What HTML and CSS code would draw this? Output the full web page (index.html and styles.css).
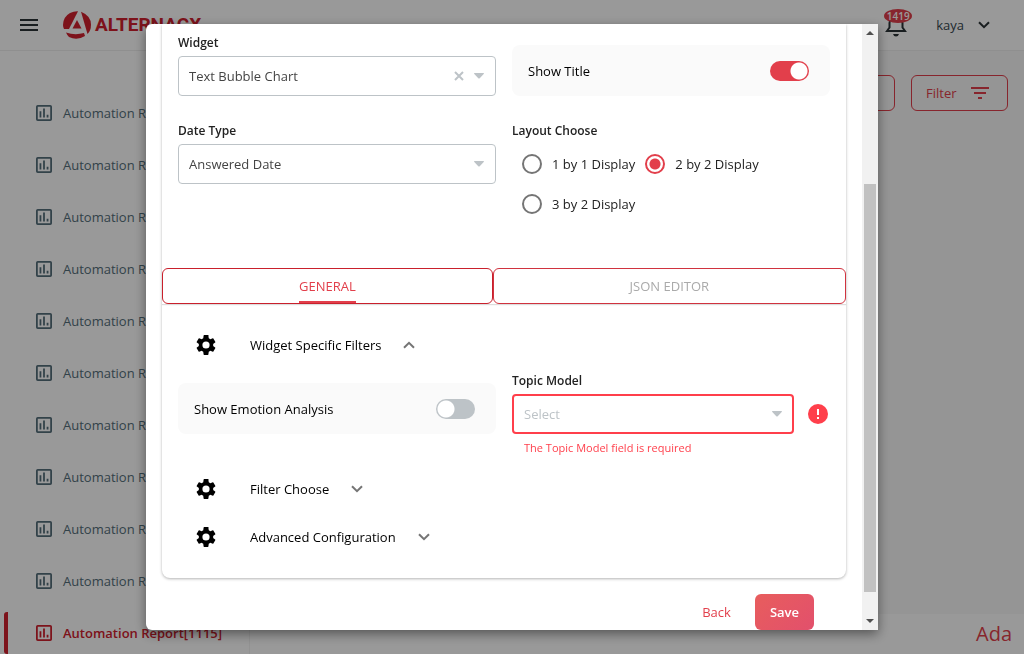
FILE: index.html
```html
<!DOCTYPE html>
<html lang="en">
<head>
<meta charset="utf-8">
<title>AlternaCX - Dashboard</title>
<link rel="stylesheet" href="styles.css">
</head>
<body>
<svg class="defs" aria-hidden="true">
  <symbol id="i-report" viewBox="3 3 18 18"><path fill-rule="evenodd" d="M19 3H5a2 2 0 0 0-2 2v14a2 2 0 0 0 2 2h14a2 2 0 0 0 2-2V5a2 2 0 0 0-2-2zm0 16H5V5h14zM7 10h2v7H7zm4-3h2v10h-2zm4 7h2v3h-2z"/></symbol>
  <symbol id="i-gear" viewBox="2 2 20 20"><path d="M19.14 12.94c.04-.3.06-.61.06-.94 0-.32-.02-.64-.07-.94l2.03-1.58a.49.49 0 0 0 .12-.61l-1.92-3.32a.49.49 0 0 0-.59-.22l-2.39.96a7 7 0 0 0-1.62-.94l-.36-2.54A.48.48 0 0 0 13.92 2h-3.84a.48.48 0 0 0-.47.41l-.36 2.940a7.400 7.400 0 0 0-1.62.94l-2.39-.96a.48.48 0 0 0-.59.22L2.74 8.87a.48.48 0 0 0 .12.61l2.03 1.58a6 6 0 0 0-.02 1.88l-2.03 1.58a.49.49 0 0 0-.12.61l1.92 3.32c.12.22.37.29.59.22l2.39-.96c.5.38 1.03.7 1.62.94l.36 2.940c.05.24.24.41.48.41h3.84c.24 0 .44-.17.47-.41l.36-2.940a7 7 0 0 0 1.62-.94l2.39.96c.22.08.47 0 .59-.22l1.92-3.32a.48.48 0 0 0-.12-.61zM12 15.600a3.600 3.600 0 1 1 0-7.200 3.600 3.600 0 0 1 0 7.200z"/></symbol>
  <symbol id="i-down" viewBox="0 0 12 8"><path d="M1 1.200l5 5 5-5" fill="none" stroke="currentColor" stroke-width="2"/></symbol>
  <symbol id="i-caret" viewBox="0 0 10 6"><path d="M.5 0h9q.8.3.2 1L5.700 5.200q-.7.600-1.400 0L.3 1Q-.3.3.5 0z"/></symbol>
</svg>

<header class="topbar">
  <button class="icon-btn" aria-label="Menu"><svg class="burger" viewBox="0 0 18 12"><path d="M0 0h18v2H0zm0 5h18v2H0zm0 5h18v2H0z"/></svg></button>
  <a class="brand" href="#">
    <svg class="brand-mark" viewBox="0 0 28 28">
      <path d="M15 .2Q11 0 7 2 0 6 0 14q0 2 1 4h5z"/>
      <path d="M18 .8q10 4 10 13 0 6-3.500 9.200z"/>
      <path d="M3 21.500q9 3 18 .5l1 3q-8 5-16 1-2-2-3-4.500z"/>
      <path d="M14 9l4.500 8.500h-9z"/>
    </svg>
    <span>ALTERNACX</span>
  </a>
  <div class="account">
    <button class="icon-btn bell" aria-label="Notifications">
      <svg viewBox="0 0 24 24"><path fill="none" stroke="currentColor" stroke-width="2" d="M3 18l2.500-3.500V10a6.500 6.500 0 0 1 13 0v4.500L21 18z"/><path d="M9 21h6q-.7 2.500-3 2.500T9 21z"/></svg>
      <span class="badge">1419</span>
    </button>
    <button class="user">kaya <svg><use href="#i-down"/></svg></button>
  </div>
</header>

<div class="shell">
  <nav class="sidebar">
    <a href="#"><svg><use href="#i-report"/></svg>Automation Report</a>
    <a href="#"><svg><use href="#i-report"/></svg>Automation Report</a>
    <a href="#"><svg><use href="#i-report"/></svg>Automation Report</a>
    <a href="#"><svg><use href="#i-report"/></svg>Automation Report</a>
    <a href="#"><svg><use href="#i-report"/></svg>Automation Report</a>
    <a href="#"><svg><use href="#i-report"/></svg>Automation Report</a>
    <a href="#"><svg><use href="#i-report"/></svg>Automation Report</a>
    <a href="#"><svg><use href="#i-report"/></svg>Automation Report</a>
    <a href="#"><svg><use href="#i-report"/></svg>Automation Report</a>
    <a href="#"><svg><use href="#i-report"/></svg>Automation Report</a>
    <a href="#" class="active"><svg><use href="#i-report"/></svg>Automation Report[1115]</a>
  </nav>
  <main class="content">
    <div class="actions">
      <button class="outline" aria-label="Options"></button>
      <button class="outline">Filter <svg viewBox="0 0 18 12"><path d="M0 0h18v2H0zm3 5h12v2H3zm4 5h4v2H7z"/></svg></button>
    </div>
    <div class="panel">Ada</div>
  </main>
</div>

<div class="backdrop">
  <div class="modal" role="dialog" aria-label="Widget settings">
    <form class="modal-body">
      <div class="card">
        <div class="fields">
          <div class="field">
            <label for="widget">Widget</label>
            <div class="select">
              <select id="widget"><option>Text Bubble Chart</option></select>
              <button type="button" class="clear" aria-label="Clear"><svg viewBox="0 0 10 10"><path d="M1 1l8 8M9 1L1 9" stroke="currentColor" stroke-width="2"/></svg></button>
              <svg class="caret"><use href="#i-caret"/></svg>
            </div>
          </div>
          <label class="switch-row">Show Title <input type="checkbox" class="switch" checked></label>
          <div class="field">
            <label for="datetype">Date Type</label>
            <div class="select">
              <select id="datetype"><option>Answered Date</option></select>
              <svg class="caret"><use href="#i-caret"/></svg>
            </div>
          </div>
          <fieldset class="field">
            <legend>Layout Choose</legend>
            <div class="radios">
              <label><input type="radio" name="layout">1 by 1 Display</label>
              <label><input type="radio" name="layout" checked>2 by 2 Display</label>
              <label><input type="radio" name="layout">3 by 2 Display</label>
            </div>
          </fieldset>
        </div>

        <div class="tabs" role="tablist">
          <button type="button" role="tab" class="selected" aria-selected="true"><span>GENERAL</span></button>
          <button type="button" role="tab" aria-selected="false"><span>JSON EDITOR</span></button>
        </div>

        <div class="sections">
          <button type="button" class="section"><svg class="gear"><use href="#i-gear"/></svg><span>Widget Specific Filters</span><svg class="chev up"><use href="#i-down"/></svg></button>
          <div class="section-fields">
            <label class="switch-row">Show Emotion Analysis <input type="checkbox" class="switch"></label>
            <div class="field">
              <label for="topic">Topic Model</label>
              <div class="with-alert">
                <div class="select invalid">
                  <select id="topic" aria-invalid="true" aria-describedby="topic-error"><option>Select</option></select>
                  <svg class="caret"><use href="#i-caret"/></svg>
                </div>
                <svg class="alert" viewBox="0 0 20 20"><circle cx="10" cy="10" r="10"/><path fill="#fff" d="M9 5h2v6H9zm0 8h2v2H9z"/></svg>
              </div>
              <p class="error" id="topic-error">The Topic Model field is required</p>
            </div>
          </div>
          <button type="button" class="section"><svg class="gear"><use href="#i-gear"/></svg><span>Filter Choose</span><svg class="chev"><use href="#i-down"/></svg></button>
          <button type="button" class="section"><svg class="gear"><use href="#i-gear"/></svg><span>Advanced Configuration</span><svg class="chev"><use href="#i-down"/></svg></button>
        </div>
      </div>
      <div class="footer">
        <button type="button" class="back">Back</button>
        <button type="submit" class="save">Save</button>
      </div>
    </form>
    <div class="scrollbar" aria-hidden="true">
      <svg viewBox="0 0 8 4"><path d="M0 4h8L4 0z"/></svg>
      <div class="track"><div class="thumb"></div></div>
      <svg viewBox="0 0 8 4"><path d="M0 0h8L4 4z"/></svg>
    </div>
  </div>
</div>
</body>
</html>
```
FILE: styles.css
```css
* { box-sizing: border-box; }
html, body { height: 100%; }
body {
  margin: 0;
  display: flex;
  flex-direction: column;
  overflow: hidden;
  background: #fff;
  color: #222;
  font: 13px/20px "Open Sans", "Noto Sans", sans-serif;
}
button, select, input { font: inherit; color: inherit; }
button { border: 0; background: none; padding: 0; cursor: pointer; }
a { color: inherit; text-decoration: none; }
svg { display: block; fill: currentColor; flex: none; }
.defs { position: absolute; width: 0; height: 0; }

.topbar {
  display: flex;
  align-items: center;
  height: 51px;
  flex: none;
  padding: 0 34px 0 20px;
  border-bottom: 1px solid #eee;
  color: #37474f;
}
.burger { width: 18px; height: 12px; color: #2b3336; }
.brand {
  display: flex;
  align-items: center;
  gap: 4px;
  margin-left: 25px;
  color: #d0202e;
  font: bold 19px/20px Roboto, sans-serif;
}
.brand-mark { width: 28px; height: 28px; }
.account { display: flex; align-items: center; gap: 28px; margin-left: auto; }
.bell { position: relative; color: #2b3336; }
.bell svg { width: 24px; height: 24px; }
.badge {
  position: absolute;
  top: -4px;
  left: 0;
  width: 28px;
  height: 14px;
  border-radius: 50%;
  background: #e23f4b;
  color: #fff;
  font-size: 10px;
  font-weight: 600;
  line-height: 14px;
  text-align: center;
}
.user { display: flex; align-items: center; gap: 14px; }
.user svg { width: 12px; height: 8px; color: #2b3336; }

.shell { display: flex; flex: 1; min-height: 0; }
.sidebar {
  display: flex;
  flex-direction: column;
  gap: 10px;
  width: 250px;
  padding: 41px 0 0 4px;
  border-right: 1px solid #f3f3f3;
}
.sidebar a {
  display: flex;
  align-items: center;
  gap: 11px;
  height: 42px;
  flex: none;
  padding-left: 28px;
  border-left: 4px solid transparent;
  color: #546e7a;
}
.sidebar svg { width: 16px; height: 16px; }
.sidebar .active {
  border-color: #d0202e;
  border-radius: 3px 0 0 3px;
  color: #d0202e;
  font-weight: 600;
}
.content { display: flex; flex-direction: column; flex: 1; background: #f8f8f8; }
.actions { display: flex; justify-content: flex-end; gap: 16px; padding: 24px 16px; }
.outline {
  display: flex;
  align-items: center;
  justify-content: space-between;
  width: 97px;
  height: 36px;
  padding: 0 18px 0 14px;
  border: 1px solid #e23f4b;
  border-radius: 6px;
  color: #e23f4b;
}
.outline svg { width: 18px; height: 12px; }
.panel {
  display: flex;
  align-items: center;
  justify-content: flex-end;
  height: 40px;
  margin-top: auto;
  padding-right: 12px;
  background: #fff;
  color: #e23f4b;
  font-size: 20px;
}

.backdrop {
  position: fixed;
  inset: 0;
  display: flex;
  justify-content: center;
  padding: 24px;
  background: rgba(0, 0, 0, .4);
}
.modal {
  display: flex;
  width: 100%;
  max-width: 732px;
  overflow: hidden;
  border-radius: 6px 0 0 6px;
  background: #fff;
  box-shadow: 0 4px 12px rgba(0, 0, 0, .45);
}
.modal-body { flex: 1; min-width: 0; padding: 0 16px; overflow: hidden; }
.card {
  border-radius: 0 0 8px 8px;
  box-shadow: 0 1px 3px rgba(0, 0, 0, .3);
}
.fields, .section-fields {
  display: grid;
  grid-template-columns: 1fr 1fr;
  gap: 24px 16px;
}
.fields { padding: 8px 16px 44px; }
.field { display: flex; flex-direction: column; gap: 2px; min-width: 0; margin: 0; padding: 0; border: 0; }
.field > label, legend { padding: 0; font-size: 12px; line-height: 22px; font-weight: 600; }
legend { margin-bottom: 2px; }
.select { position: relative; flex: 1; }
.select select {
  display: block;
  appearance: none;
  width: 100%;
  height: 40px;
  padding: 0 40px 0 10px;
  border: 1px solid #bdc3c7;
  border-radius: 4px;
  background: #fff;
  color: #444;
}
.caret { position: absolute; right: 12px; top: 17px; width: 10px; height: 6px; color: #bdc3c7; pointer-events: none; }
.clear { position: absolute; right: 32px; top: 15px; color: #bdc3c7; }
.clear svg { width: 10px; height: 10px; }
.select.invalid select { border: 2px solid #ff3f4b; color: #bdc3c7; }
.with-alert { display: flex; align-items: center; gap: 14px; padding-right: 2px; }
.alert { width: 20px; height: 20px; color: #ff3f4b; }
.error { margin: 0; padding-left: 12px; color: #ff3f4b; font-size: 11px; line-height: 24px; }

.switch-row {
  display: flex;
  align-items: center;
  justify-content: space-between;
  align-self: end;
  height: 51px;
  padding: 0 21px 0 16px;
  border-radius: 8px;
  background: #fafafa;
  color: #000;
}
.switch {
  appearance: none;
  width: 39px;
  height: 20px;
  margin: 0;
  border-radius: 10px;
  background: radial-gradient(circle at 10px 10px, #fff 8px, transparent 9px) #bdc3c7;
}
.switch:checked { background: radial-gradient(circle at 29px 10px, #fff 8px, transparent 9px) #e23f4b; }

.radios { display: flex; flex-wrap: wrap; column-gap: 10px; padding-left: 10px; }
.radios label { display: flex; align-items: center; gap: 10px; height: 40px; }
.radios input {
  appearance: none;
  width: 20px;
  height: 20px;
  margin: 0;
  border: 2px solid #757575;
  border-radius: 50%;
}
.radios input:checked { border-color: #e23f4b; background: radial-gradient(circle, #e23f4b 5px, transparent 6px); }

.tabs { display: flex; box-shadow: 0 1px 1px #ddd; }
.tabs button {
  flex: 1 1 auto;
  height: 36px;
  border: 1px solid #d0333f;
  border-radius: 6px;
  color: #aaa;
}
.tabs span { display: inline-block; height: 34px; line-height: 34px; }
.tabs .selected { border-color: #c9202c; color: #e23f4b; }
.tabs .selected span { box-shadow: inset 0 -2px #e23f4b; }

.sections { padding: 17px 16px; }
.section {
  display: flex;
  align-items: center;
  height: 48px;
  width: 100%;
  padding-left: 18px;
  color: #000;
}
.gear { width: 20px; height: 20px; margin-right: 34px; }
.chev { width: 12px; height: 8px; margin-left: 22px; color: #757575; }
.up { transform: rotate(180deg); }
.section-fields { align-items: start; padding: 1px 0 5px; }
.section-fields .switch-row { align-self: start; margin-top: 13px; }

.footer { display: flex; justify-content: flex-end; gap: 24px; padding: 16px 32px 0; }
.back, .save { height: 36px; border-radius: 6px; }
.back { color: #e23f4b; }
.save { padding: 0 15px; background: linear-gradient(135deg, #e85d5d, #e2506c); color: #fff; font-weight: 600; }

.scrollbar {
  display: flex;
  flex-direction: column;
  align-items: center;
  width: 16px;
  padding: 7px 0;
  background: #f1f1f1;
  color: #505050;
}
.scrollbar svg { width: 8px; height: 4px; }
.track { display: flex; flex-direction: column; flex: 1; width: 12px; padding: 5px 0 27px; justify-content: flex-end; }
.thumb { height: 74%; background: #c1c1c1; }
```
